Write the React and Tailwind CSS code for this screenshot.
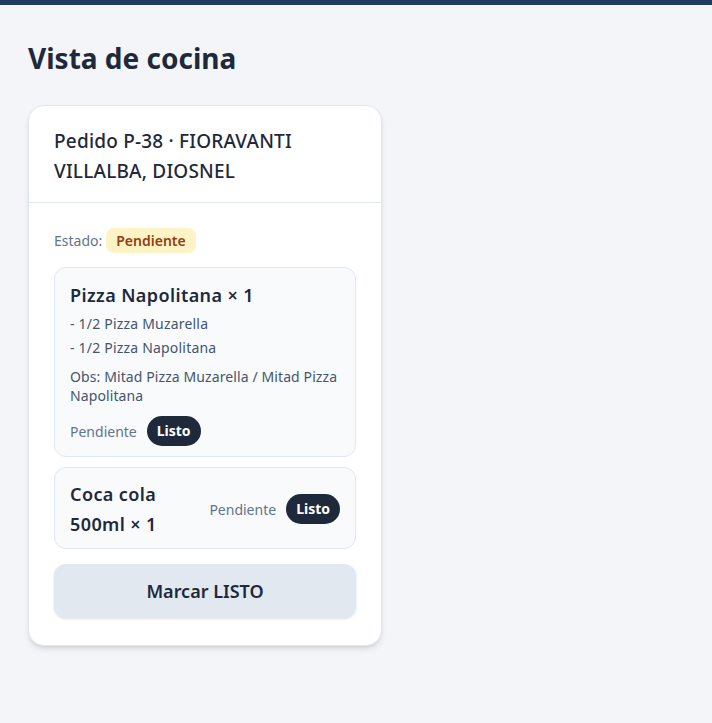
import React from "react";

const items = [
  {
    name: "Pizza Napolitana × 1",
    extras: ["- 1/2 Pizza Muzarella", "- 1/2 Pizza Napolitana"],
    obs: "Obs: Mitad Pizza Muzarella / Mitad Pizza Napolitana",
  },
  { name: "Coca cola 500ml × 1" },
];

function ItemStatus() {
  return (
    <div className="flex items-center gap-[10px] shrink-0">
      <span className="text-[14px] text-slate-500">Pendiente</span>
      <button className="bg-[#1e293b] text-white text-[14px] font-bold rounded-full px-[10px] h-[30px] leading-none">
        Listo
      </button>
    </div>
  );
}

export default function App() {
  return (
    <div
      className="min-h-screen bg-[#f3f5f9] text-[#1e293b]"
      style={{ fontFamily: '"Noto Sans", "Open Sans", sans-serif' }}
    >
      <div className="h-[5px] bg-[#1e3a5f]" />
      <div className="px-[28px] pt-[33px]">
        <h1 className="text-[28px] font-bold leading-[40px] mb-[27px]">Vista de cocina</h1>

        <div className="w-[354px] bg-white rounded-[16px] border border-slate-200 shadow-md">
          <div className="px-[25px] pt-[20px] pb-[16px] border-b border-slate-200">
            <h2 className="text-[19px] font-medium leading-[30px] tracking-[0.2px]">
              Pedido P-38 · FIORAVANTI VILLALBA, DIOSNEL
            </h2>
          </div>

          <div className="px-[25px] pt-[25px] pb-[27px]">
            <div className="flex items-center gap-[4px] mb-[14px]">
              <span className="text-[14px] text-slate-500">Estado:</span>
              <span className="bg-[#fef3c7] text-[#92400e] text-[14px] font-semibold rounded-[8px] px-[10px] py-[2px]">
                Pendiente
              </span>
            </div>

            <div className="flex flex-col gap-[10px]">
              <div className="bg-[#f8fafc] border border-slate-200 rounded-[12px] px-[15px] pt-[13px] pb-[10px]">
                <div className="text-[18px] font-semibold leading-[28px] mb-[3px] tracking-[0.4px]">
                  {items[0].name}
                </div>
                {items[0].extras.map((e) => (
                  <div key={e} className="text-[14px] text-slate-600 leading-[24px] tracking-[0.2px]">
                    {e}
                  </div>
                ))}
                <div className="text-[14px] text-slate-600 leading-[19px] mt-[7px] mb-[11px] tracking-[0.1px]">
                  {items[0].obs}
                </div>
                <ItemStatus />
              </div>

              <div className="bg-[#f8fafc] border border-slate-200 rounded-[12px] px-[15px] pt-[11px] pb-[9px] flex items-center justify-between">
                <div className="text-[18px] font-semibold leading-[30px] w-[120px] tracking-[0.4px]">
                  {items[1].name}
                </div>
                <ItemStatus />
              </div>
            </div>

            <button className="mt-[15px] w-full h-[54px] bg-[#e2e8f0] rounded-[12px] text-[18px] font-semibold shadow-sm">
              Marcar LISTO
            </button>
          </div>
        </div>
      </div>
    </div>
  );
}
